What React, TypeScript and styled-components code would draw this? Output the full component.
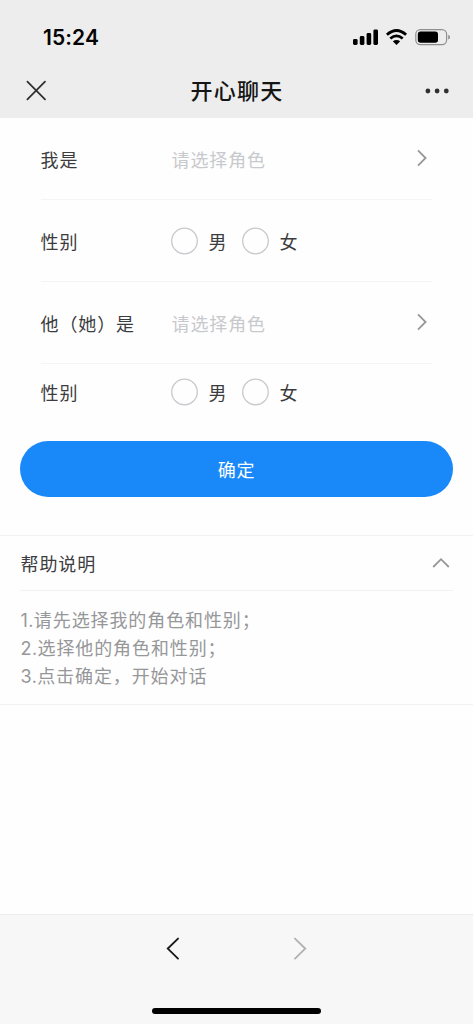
import React from 'react';
import styled, { createGlobalStyle } from 'styled-components';

const GlobalStyle = createGlobalStyle`
  * { box-sizing: border-box; }
  body {
    margin: 0;
    background: #fefefe;
    font-family: Inter, "Noto Sans CJK SC", sans-serif;
    color: #3c3c3e;
  }
`;

const Page = styled.div`
  display: flex;
  flex-direction: column;
  height: 1024px;
  width: 473px;
  overflow: hidden;
`;

const Header = styled.header`
  height: 118px;
  flex: none;
  background: #ededed;
`;

const StatusBar = styled.div`
  display: flex;
  align-items: center;
  justify-content: space-between;
  height: 64px;
  padding: 11px 23px 0 43px;
`;

const Time = styled.span`
  font-size: 21px;
  line-height: 26px;
  font-weight: 600;
  letter-spacing: 0.1px;
  color: #050505;
`;

const StatusIcons = styled.div`
  display: flex;
  align-items: center;
  padding-bottom: 1px;
`;

const NavBar = styled.div`
  display: grid;
  grid-template-columns: 60px 1fr 60px;
  align-items: center;
  height: 53px;
  padding: 0 24px 0 25px;
`;

const Title = styled.h1`
  margin: 0;
  padding-top: 1px;
  text-align: center;
  font-size: 22px;
  line-height: 30px;
  font-weight: 500;
  letter-spacing: 1.2px;
  color: #151515;
`;

const IconSlot = styled.span<{ $end?: boolean }>`
  display: flex;
  justify-content: ${(p) => (p.$end ? 'flex-end' : 'flex-start')};
`;

const Form = styled.form`
  padding: 0 41px 0 40.5px;
`;

const Row = styled.div<{ $last?: boolean }>`
  display: flex;
  align-items: center;
  height: ${(p) => (p.$last ? '55px' : '82px')};
  border-bottom: ${(p) => (p.$last ? '0' : '1px solid #f4f4f5')};
`;

const Label = styled.span`
  width: 130.5px;
  padding-top: 4px;
  font-size: 18px;
  line-height: 28px;
  letter-spacing: 0.9px;
  white-space: nowrap;
`;

const Placeholder = styled.span`
  flex: 1;
  padding: 4px 0 0 0.5px;
  font-size: 18px;
  line-height: 28px;
  letter-spacing: 0.9px;
  color: #c8c9cc;
`;

const Arrow = styled.svg`
  margin: 0 4px 2px 0;
`;

const Radio = styled.label`
  display: flex;
  align-items: center;
  width: 71px;
  gap: 10.5px;
`;

const RadioText = styled.span`
  padding-top: 4px;
  font-size: 18px;
  line-height: 28px;
`;

const Circle = styled.svg`
  flex: none;
`;

const Submit = styled.button`
  display: block;
  width: 433px;
  height: 56px;
  margin: 22px 20px 38px;
  padding: 2px 0 0;
  border: 0;
  border-radius: 28px;
  background: #1989fa;
  color: #fff;
  font: 400 18px/56px Inter, "Noto Sans CJK SC", sans-serif;
  letter-spacing: 0.8px;
`;

const Help = styled.section`
  border-top: 1px solid #f2f2f3;
  border-bottom: 1px solid #f2f2f3;
  padding: 0 20px;
`;

const HelpHeader = styled.div`
  display: flex;
  align-items: center;
  justify-content: space-between;
  height: 55px;
  border-bottom: 1px solid #f2f2f3;
  padding: 0 3px 0 0.5px;
`;

const HelpTitle = styled.span`
  padding-top: 3px;
  font-size: 18px;
  line-height: 28px;
  letter-spacing: 0.9px;
`;

const HelpBody = styled.div`
  padding: 16px 0 13px 0.5px;
  font-size: 18px;
  line-height: 28px;
  letter-spacing: 0.9px;
  color: #969799;
`;

const Step = styled.div``;

const StepNumber = styled.span`
  letter-spacing: 0.4px;
`;

const Footer = styled.footer`
  display: flex;
  flex-direction: column;
  align-items: center;
  justify-content: space-between;
  height: 110px;
  margin-top: auto;
  padding: 22px 0 10px;
  border-top: 1px solid #ececec;
  background: #f7f7f7;
`;

const Pager = styled.div`
  display: flex;
  justify-content: space-between;
  width: 141px;
`;

const HomeIndicator = styled.div`
  width: 169px;
  height: 6.5px;
  border-radius: 4px;
  background: #000;
`;

const RowArrow = () => (
  <Arrow width="12" height="18" viewBox="0 0 12 18" fill="none">
    <path d="M2 1.4 9.6 9 2 16.6" stroke="#969799" strokeWidth="1.8" />
  </Arrow>
);

const PageArrow = ({ color, forward }: { color: string; forward?: boolean }) => (
  <svg width="14" height="24" viewBox="0 0 14 24" fill="none">
    <path
      d={forward ? 'M2 1.6 12.2 11.6 2 21.6' : 'M12 1.6 1.8 11.6 12 21.6'}
      stroke={color}
      strokeWidth="1.9"
      strokeLinecap="round"
    />
  </svg>
);

const Option = ({ text }: { text: string }) => (
  <Radio>
    <Circle width="27" height="28" viewBox="0 0 27 28" fill="none">
      <circle cx="13.5" cy="14" r="12.8" stroke="#c8c9cc" strokeWidth="1.3" />
    </Circle>
    <RadioText>{text}</RadioText>
  </Radio>
);

const GenderOptions = () => (
  <>
    <Option text="男" />
    <Option text="女" />
  </>
);

const steps = ['请先选择我的角色和性别；', '选择他的角色和性别；', '点击确定，开始对话'];

export default function App() {
  return (
    <Page>
      <GlobalStyle />
      <Header>
        <StatusBar>
          <Time>15:24</Time>
          <StatusIcons>
            <svg width="97" height="20" viewBox="0 0 97 20" fill="none">
              <g fill="#000">
                <rect x="0" y="12" width="4.6" height="6" rx="1.4" />
                <rect x="6.8" y="9" width="4.6" height="9" rx="1.4" />
                <rect x="13.6" y="6" width="4.6" height="12" rx="1.4" />
                <rect x="20.4" y="2.4" width="4.6" height="15.6" rx="1.4" />
                <path d="M43.5 18 39.8 14.3Q43.5 11.8 47.2 14.3Z" />
              </g>
              <path d="M33.9 7.8Q43.5-.7 53.1 7.8" stroke="#000" strokeWidth="2.8" />
              <path d="M37.3 11.5Q43.5 6.2 49.7 11.5" stroke="#000" strokeWidth="2.8" />
              <rect x="62.8" y="2.7" width="30.8" height="15" rx="4.6" stroke="#8f8f8f" strokeWidth="1.2" />
              <rect x="64.8" y="4.6" width="20.2" height="11.2" rx="2.8" fill="#000" />
              <path d="M95.2 7.8Q97 8.6 97 10.2T95.2 12.6Z" fill="#8f8f8f" />
            </svg>
          </StatusIcons>
        </StatusBar>
        <NavBar>
          <IconSlot>
            <svg width="22" height="22" viewBox="0 0 22 22" fill="none">
              <path d="M2.4 1.7 20 19.3M20 1.7 2.4 19.3" stroke="#303030" strokeWidth="1.8" strokeLinecap="round" />
            </svg>
          </IconSlot>
          <Title>开心聊天</Title>
          <IconSlot $end>
            <svg width="24" height="6" viewBox="0 0 24 6" fill="#303030">
              <circle cx="2.9" cy="3" r="2.4" />
              <circle cx="12.1" cy="3" r="2.4" />
              <circle cx="21.3" cy="3" r="2.4" />
            </svg>
          </IconSlot>
        </NavBar>
      </Header>
      <Form>
        <Row><Label>我是</Label><Placeholder>请选择角色</Placeholder><RowArrow /></Row>
        <Row><Label>性别</Label><GenderOptions /></Row>
        <Row><Label>他（她）是</Label><Placeholder>请选择角色</Placeholder><RowArrow /></Row>
        <Row $last><Label>性别</Label><GenderOptions /></Row>
      </Form>
      <Submit type="button">确定</Submit>
      <Help>
        <HelpHeader>
          <HelpTitle>帮助说明</HelpTitle>
          <svg width="18" height="12" viewBox="0 0 18 12" fill="none">
            <path d="M1.2 10 9 2.2 16.8 10" stroke="#969799" strokeWidth="1.8" />
          </svg>
        </HelpHeader>
        <HelpBody>
          {steps.map((step, i) => (
            <Step key={step}><StepNumber>{i + 1}.</StepNumber>{step}</Step>
          ))}
        </HelpBody>
      </Help>
      <Footer>
        <Pager>
          <PageArrow color="#191919" />
          <PageArrow color="#b2b2b2" forward />
        </Pager>
        <HomeIndicator />
      </Footer>
    </Page>
  );
}
